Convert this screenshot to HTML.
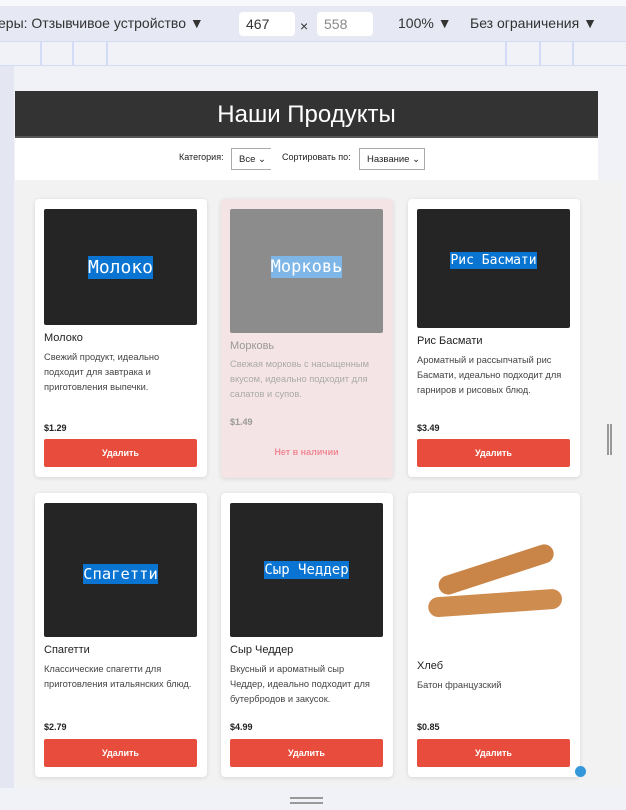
<!DOCTYPE html>
<html><head><meta charset="utf-8"><style>
*{box-sizing:border-box;margin:0;padding:0}
body{width:626px;height:810px;overflow:hidden;background:#f0f2f8;font-family:"Liberation Sans",Arial,sans-serif;position:relative}
.abs{position:absolute}
.tb{top:0;left:0;width:626px;height:41px;background:#e6e8f3;border-top:6px solid #f7f8fb;font-size:14px;color:#333}
.ruler{top:41px;left:0;width:626px;height:25px;background:#f1f2f8;border-top:1px solid #d3dcf5;border-bottom:1px solid #d3dcf5}
.rl{top:41px;width:2px;height:25px;background:#d3dcf5}
.left{top:66px;left:0;width:14px;height:722px;background:#e4e6f1}
.hdr{left:15px;top:91px;width:583px;height:47px;background:#333;color:#fff;font-size:24px;text-align:center;line-height:47px;border-bottom:2px solid #555}
.flt{left:15px;top:138px;width:583px;height:42px;background:#fff;font-size:9px;color:#222}
.sel{position:absolute;top:10px;height:22px;border:1px solid #aaa;background:#fff;font-size:9.5px;line-height:22px;padding-left:7px}
.main{left:15px;top:180px;width:607px;height:608px;background:#f2f2f2}
.card{position:absolute;width:172px;background:#fff;border-radius:4px;box-shadow:0 1px 4px rgba(0,0,0,.12)}
.img{position:absolute;left:9px;top:10px;width:153px;background:#252525;border-radius:2px;display:flex;align-items:center;justify-content:center}
.img span{background:#0a74d2;color:#fff;font-family:"DejaVu Sans Mono","Liberation Mono",monospace;font-size:15px;padding:1px 0}
.t{position:absolute;left:9px;font-size:11px;color:#222}
.d{position:absolute;left:9px;width:152px;font-size:9.3px;line-height:15px;color:#444}
.p{position:absolute;left:9px;font-size:9px;font-weight:bold;color:#222}
.b{position:absolute;left:9px;width:153px;height:28px;background:#e74c3c;color:#fff;font-size:9px;font-weight:bold;text-align:center;line-height:28px;border-radius:2px}
</style></head><body>
<div class="abs tb"><span class="abs" style="left:-2px;top:9px">еры: Отзывчивое устройство ▼</span>
<div class="abs" style="left:239px;top:6px;width:56px;height:24px;background:#fff;border-radius:4px;padding:4px 7px">467</div>
<span class="abs" style="left:300px;top:12px">×</span>
<div class="abs" style="left:317px;top:6px;width:56px;height:24px;background:#fff;border-radius:4px;padding:4px 7px;color:#888">558</div>
<span class="abs" style="left:398px;top:9px">100% ▼</span>
<span class="abs" style="left:470px;top:9px">Без ограничения ▼</span></div>
<div class="abs ruler"></div>
<div class="abs rl" style="left:40px"></div><div class="abs rl" style="left:72px"></div><div class="abs rl" style="left:106px"></div>
<div class="abs rl" style="left:505px"></div><div class="abs rl" style="left:539px"></div><div class="abs rl" style="left:572px"></div>
<div class="abs left"></div>
<div class="abs hdr">Наши Продукты</div>
<div class="abs flt"><span class="abs" style="left:164px;top:14px">Категория:</span>
<div class="sel" style="left:216px;width:40px;border-right:none">Все ⌄</div>
<span class="abs" style="left:267px;top:14px">Сортировать по:</span>
<div class="sel" style="left:344px;width:66px">Название ⌄</div></div>
<div class="abs main">
<div class="card" style="left:20px;top:19px;height:278px"><div class="img" style="height:116px"><span style="font-size:18px">Молоко</span></div>
<div class="t" style="top:133px">Молоко</div><div class="d" style="top:151px;width:140px">Свежий продукт, идеально подходит для завтрака и приготовления выпечки.</div>
<div class="p" style="top:224px">$1.29</div><div class="b" style="top:240px">Удалить</div></div>
<div class="card" style="left:206px;top:19px;height:279px;background:#f4e4e5"><div class="img" style="height:124px;background:#8c8c8c"><span style="background:#7fb6e8;font-size:17px;margin-bottom:8px">Морковь</span></div>
<div class="t" style="top:141px;color:#999">Морковь</div><div class="d" style="top:158px;color:#aaa">Свежая морковь с насыщенным вкусом, идеально подходит для салатов и супов.</div>
<div class="p" style="top:218px;color:#999">$1.49</div><div class="b" style="top:239px;background:none;color:#f08a96">Нет в наличии</div></div>
<div class="card" style="left:393px;top:19px;height:278px"><div class="img" style="height:119px"><span style="font-size:13px;margin-bottom:16px">Рис Басмати</span></div>
<div class="t" style="top:136px">Рис Басмати</div><div class="d" style="top:154px">Ароматный и рассыпчатый рис Басмати, идеально подходит для гарниров и рисовых блюд.</div>
<div class="p" style="top:224px">$3.49</div><div class="b" style="top:240px">Удалить</div></div>
<div class="card" style="left:20px;top:313px;height:284px"><div class="img" style="height:134px"><span style="font-size:15.5px;margin-top:7px">Спагетти</span></div>
<div class="t" style="top:151px">Спагетти</div><div class="d" style="top:169px">Классические спагетти для приготовления итальянских блюд.</div>
<div class="p" style="top:229px">$2.79</div><div class="b" style="top:246px">Удалить</div></div>
<div class="card" style="left:206px;top:313px;height:284px"><div class="img" style="height:134px"><span style="font-size:14px">Сыр Чеддер</span></div>
<div class="t" style="top:151px">Сыр Чеддер</div><div class="d" style="top:169px;width:148px">Вкусный и ароматный сыр Чеддер, идеально подходит для бутербродов и закусок.</div>
<div class="p" style="top:229px">$4.99</div><div class="b" style="top:246px">Удалить</div></div>
<div class="card" style="left:393px;top:313px;height:284px">
<svg class="abs" style="left:18px;top:48px" width="140" height="80"><g transform="rotate(-18 70 28)"><rect x="10" y="19" width="120" height="19" rx="9.5" fill="#c98548"/></g><g transform="rotate(-4 70 60)"><rect x="2" y="52" width="134" height="20" rx="10" fill="#cf8c4f"/></g></svg>
<div class="t" style="top:167px">Хлеб</div><div class="d" style="top:185px">Батон французский</div>
<div class="p" style="top:229px">$0.85</div><div class="b" style="top:246px">Удалить</div></div>
</div>
<div class="abs" style="left:607px;top:424px;width:5px;height:31px;border-left:2px solid #999;border-right:2px solid #999"></div>
<div class="abs" style="left:575px;top:766px;width:11px;height:11px;border-radius:50%;background:#3498db"></div>
<div class="abs" style="left:290px;top:797px;width:33px;height:7px;border-top:2px solid #999;border-bottom:2px solid #999"></div>
</body></html>
